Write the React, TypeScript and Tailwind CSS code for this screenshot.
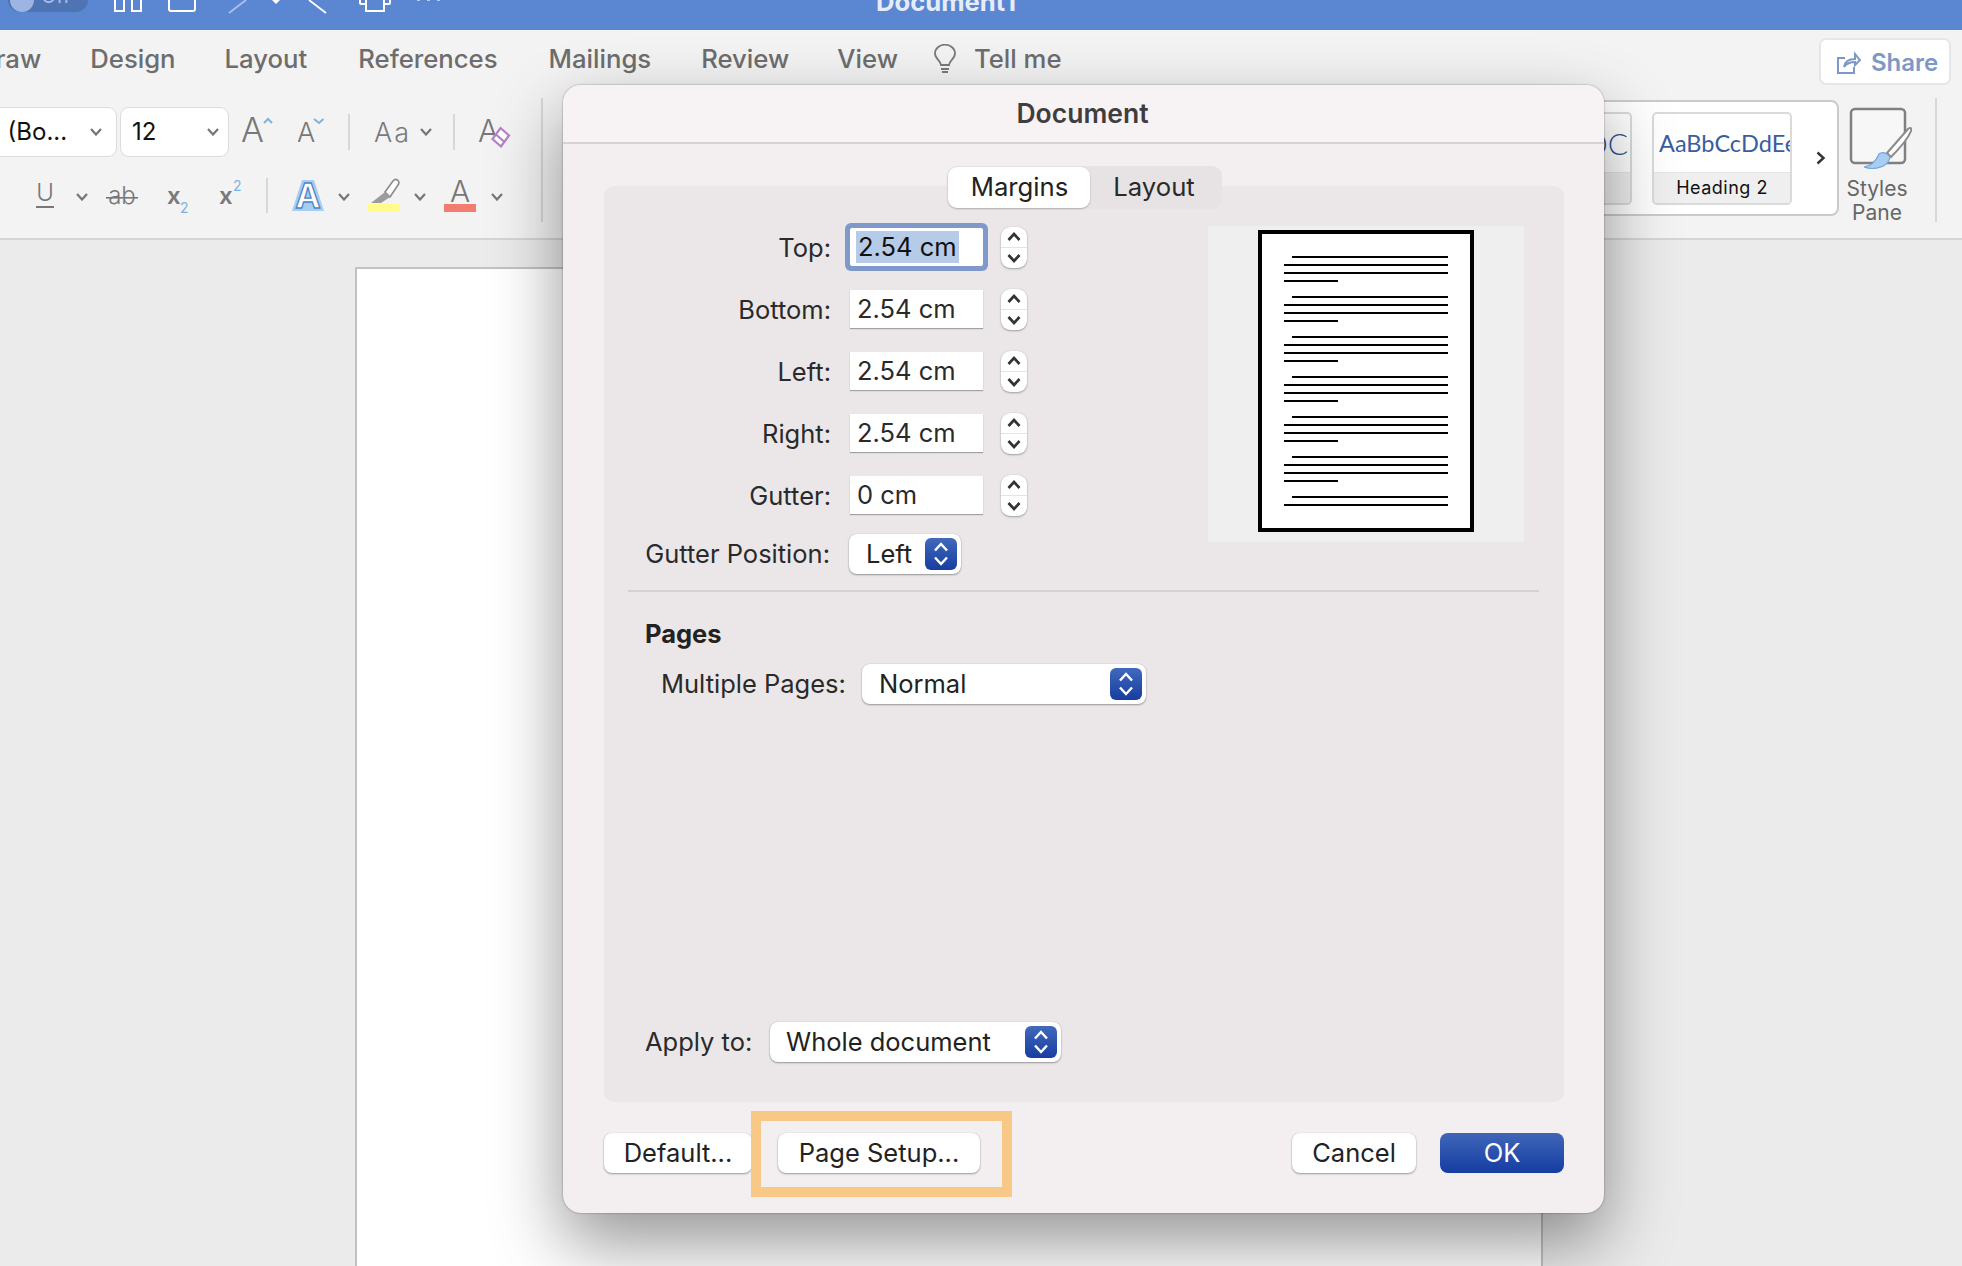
import React from "react";

const Chev = ({ c = "" }: { c?: string }) => (
  <svg viewBox="0 0 12 8" className={`w-[12px] h-[8px] shrink-0 ${c}`} fill="none" stroke="#757575" strokeWidth="2.2">
    <polyline points="1,1 6,6.5 11,1" />
  </svg>
);

const Sep = ({ c }: { c: string }) => <div className={`w-[2px] bg-[#d8d8d8] shrink-0 ${c}`} />;

const Updown = () => (
  <svg viewBox="0 0 16 26" className="w-[16px] h-[26px]" fill="none" stroke="#ffffff" strokeWidth="2.5">
    <polyline points="2,9.5 8,3 14,9.5" />
    <polyline points="2,16.5 8,23 14,16.5" />
  </svg>
);

const Select = ({ label, w, ml, pl }: { label: string; w: string; ml: string; pl: string }) => (
  <div className={`h-[40px] bg-white rounded-[8px] flex items-center justify-between pr-[4px] shadow-[0_1px_2px_rgba(0,0,0,0.35),0_0_1px_rgba(0,0,0,0.2)] shrink-0 ${w} ${ml} ${pl}`}>
    <span className="text-[25.5px] text-[#222222] leading-none">{label}</span>
    <div className="w-[32px] h-[32px] rounded-[6px] bg-gradient-to-b from-[#4169bb] to-[#173da0] flex items-center justify-center">
      <Updown />
    </div>
  </div>
);

const Stepper = () => (
  <div className="ml-[18px] w-[26px] h-[41px] bg-white rounded-[9px] shadow-[0_1px_2px_rgba(0,0,0,0.3),0_0_1px_rgba(0,0,0,0.2)] flex flex-col items-center justify-between py-[5px] relative shrink-0">
    <svg viewBox="0 0 14 9" className="w-[14px] h-[9px]" fill="none" stroke="#333333" strokeWidth="2.7"><polyline points="1.5,8 7,2 12.5,8" /></svg>
    <div className="w-full h-[1px] bg-[#e4e4e4]" />
    <svg viewBox="0 0 14 9" className="w-[14px] h-[9px]" fill="none" stroke="#333333" strokeWidth="2.7"><polyline points="1.5,1 7,7 12.5,1" /></svg>
  </div>
);

const FieldRow = ({ label, value, focus }: { label: string; value: string; focus?: boolean }) => (
  <div className="h-[62px] flex items-center">
    <div className="w-[227px] text-right text-[25.5px] text-[#2a2a2a] leading-none pt-[1px]">{label}</div>
    <div
      className={
        focus
          ? "ml-[19px] w-[133px] h-[38px] bg-white flex items-center pl-[6px] rounded-[2px] shadow-[0_0_0_5px_#7f99cb]"
          : "ml-[19px] w-[133px] h-[38px] bg-white flex items-center pl-[7px] shadow-[0_1px_1px_rgba(0,0,0,0.3)]"
      }
    >
      {focus ? (
        <span className="text-[25.5px] text-[#111111] leading-[32px] bg-[#b6cbe8] px-[2px]">{value}</span>
      ) : (
        <span className="text-[25.5px] text-[#2a2a2a] leading-none">{value}</span>
      )}
    </div>
    <Stepper />
  </div>
);

const Btn = ({ label, w, ml }: { label: string; w: string; ml: string }) => (
  <div className={`h-[40px] bg-white rounded-[8px] flex items-center justify-center text-[25.5px] text-[#222222] shadow-[0_1px_2px_rgba(0,0,0,0.35),0_0_1px_rgba(0,0,0,0.2)] shrink-0 ${w} ${ml}`}>
    {label}
  </div>
);

const Preview = () => {
  const groups = [0, 40, 80, 120, 160, 200];
  return (
    <svg viewBox="0 0 216 302" className="w-[216px] h-[302px]">
      <rect x="2" y="2" width="212" height="298" fill="#ffffff" stroke="#000000" strokeWidth="4" />
      {groups.map((g) => (
        <g key={g} fill="#000000">
          <rect x="34" y={26 + g} width="156" height="2" />
          <rect x="26" y={34 + g} width="164" height="2" />
          <rect x="26" y={42 + g} width="164" height="2" />
          <rect x="26" y={50 + g} width="54" height="2" />
        </g>
      ))}
      <rect x="34" y="266" width="156" height="2" fill="#000000" />
      <rect x="26" y="274" width="164" height="2" fill="#000000" />
    </svg>
  );
};

const Dialog = () => (
  <div className="absolute left-[563px] top-[85px] w-[1041px] h-[1128px] rounded-[18px] bg-[#f3eff0] shadow-[0_30px_70px_rgba(0,0,0,0.42),0_0_2px_rgba(0,0,0,0.45)] flex flex-col">
    <div className="h-[59px] shrink-0 border-b-2 border-[#d6d2d3] bg-[#f7f2f3] rounded-t-[18px] flex items-center justify-center text-[26.5px] font-semibold text-[#3f3d3e] pr-[2px]">
      Document
    </div>
    <div className="px-[41px] pt-[22px] flex-1 flex flex-col relative">
      <div className="relative z-10 self-center ml-[1px] h-[43px] w-[275px] rounded-[10px] bg-[#e7e3e4] flex items-center pl-[1px] text-[25.7px] text-[#222222]">
        <div className="w-[142px] h-[41px] rounded-[9px] bg-white shadow-[0_1px_2px_rgba(0,0,0,0.25)] flex items-center justify-center pl-[2px]">Margins</div>
        <div className="flex-1 text-center pr-[3px] text-[#2a2a2a]">Layout</div>
      </div>
      <div className="-mt-[23px] h-[916px] w-[960px] rounded-[10px] bg-[#ebe7e8] flex flex-col">
        <div className="flex pt-[30px] justify-between pr-[40px]">
          <div className="flex flex-col">
            <FieldRow label="Top:" value="2.54 cm" focus />
            <FieldRow label="Bottom:" value="2.54 cm" />
            <FieldRow label="Left:" value="2.54 cm" />
            <FieldRow label="Right:" value="2.54 cm" />
            <FieldRow label="Gutter:" value="0 cm" />
            <div className="flex items-center mt-[8px]">
              <div className="w-[226px] text-right text-[25.5px] text-[#2a2a2a] leading-none whitespace-nowrap">Gutter Position:</div>
              <Select label="Left" w="w-[112px]" ml="ml-[19px]" pl="pl-[17px]" />
            </div>
          </div>
          <div className="mt-[10px] w-[316px] h-[316px] bg-[#efefef] flex items-start justify-center pt-[4px]">
            <Preview />
          </div>
        </div>
        <div className="mt-[16px] ml-[24px] mr-[25px] h-[2px] bg-[#d5d1d2]" />
        <div className="mt-[27px] ml-[41px] text-[25.5px] font-bold text-[#222222] leading-[30px]">Pages</div>
        <div className="mt-[15px] flex items-center ml-[57px]">
          <div className="text-[25.5px] text-[#2a2a2a] leading-none w-[184px] whitespace-nowrap">Multiple Pages:</div>
          <Select label="Normal" w="w-[284px]" ml="ml-[17px]" pl="pl-[17px]" />
        </div>
        <div className="mt-auto mb-[40px] flex items-center ml-[41px]">
          <div className="text-[25.5px] text-[#2a2a2a] leading-none w-[107px] whitespace-nowrap">Apply to:</div>
          <Select label="Whole document" w="w-[291px]" ml="ml-[18px]" pl="pl-[16px]" />
        </div>
      </div>
      <div className="mt-[31px] flex">
        <Btn label="Default..." w="w-[148px]" ml="ml-0" />
        <Btn label="Page Setup..." w="w-[202px]" ml="ml-[26px]" />
        <Btn label="Cancel" w="w-[124px]" ml="ml-[312px]" />
        <div className="ml-[24px] w-[124px] h-[40px] rounded-[8px] bg-gradient-to-b from-[#3f66b8] to-[#153ca2] flex items-center justify-center text-[25.5px] text-white shrink-0">OK</div>
      </div>
    </div>
    <div className="absolute left-[188px] top-[1026px] w-[261px] h-[86px] border-[10px] border-[#f8c986]" />
  </div>
);

const TitleBar = () => (
  <div className="h-[30px] shrink-0 bg-[#5b87d2] overflow-hidden flex items-start">
    <div className="ml-[8px] w-[80px] h-[12px] rounded-b-[12px] bg-[#4f74b4] flex items-end overflow-hidden">
      <div className="ml-[2px] w-[24px] h-[12px] rounded-b-full bg-[#9db5e3] shrink-0" />
      <span className="ml-[7px] mb-[6px] text-[20px] leading-[20px] text-[#a9c0ea]">Off</span>
    </div>
    <svg viewBox="0 0 28 12" className="ml-[26px] w-[28px] h-[12px]" fill="none" stroke="#ffffff" strokeWidth="2">
      <path d="M1 0V11H10V0M18 0V11H27V0" />
    </svg>
    <svg viewBox="0 0 28 12" className="ml-[26px] w-[28px] h-[12px]" fill="none" stroke="#ffffff" strokeWidth="2">
      <path d="M1 0V9Q1 11 3 11H25Q27 11 27 9V0" />
    </svg>
    <svg viewBox="0 0 20 14" className="ml-[32px] w-[20px] h-[14px]" fill="none" stroke="#a9c0ea" strokeWidth="1.8">
      <path d="M1 13L18 0" />
    </svg>
    <svg viewBox="0 0 8 4" className="ml-[24px] w-[8px] h-[4px]" fill="#ffffff"><path d="M0 0H8L4 4Z" /></svg>
    <svg viewBox="0 0 20 14" className="ml-[28px] w-[20px] h-[14px]" fill="none" stroke="#ffffff" strokeWidth="1.8">
      <path d="M1 0L18 13" />
    </svg>
    <svg viewBox="0 0 32 12" className="ml-[31px] w-[32px] h-[12px]" fill="none" stroke="#ffffff" strokeWidth="2">
      <path d="M1 0V3Q1 4 3 4H7M25 4H29Q31 4 31 3V0M7 0V11H25V0" />
    </svg>
    <div className="ml-[26px] flex gap-[7px]">
      <div className="w-[3px] h-[1px] bg-[#b9cbee]" />
      <div className="w-[3px] h-[1px] bg-[#b9cbee]" />
      <div className="w-[3px] h-[1px] bg-[#b9cbee]" />
    </div>
    <div className="ml-[436px] -mt-[12px] text-[25.6px] leading-[28px] font-bold text-[#e6ecf8] whitespace-nowrap">Document1</div>
  </div>
);

const Tabs = () => (
  <div className="h-[68px] flex items-start text-[25.7px] font-medium text-[#6d6d6d] leading-[58px] whitespace-nowrap">
    <span className="-ml-[23px]">Draw</span>
    <span className="ml-[49px]">Design</span>
    <span className="ml-[49px]">Layout</span>
    <span className="ml-[51px]">References</span>
    <span className="ml-[51px]">Mailings</span>
    <span className="ml-[50px]">Review</span>
    <span className="ml-[48px]">View</span>
    <svg viewBox="0 0 22 30" className="ml-[36px] mt-[14px] w-[22px] h-[30px]" fill="none" stroke="#7a7a7a" strokeWidth="1.8">
      <path d="M7 21C7 17 1 15 1 9.5A10 8.8 0 0 1 21 9.5C21 15 15 17 15 21Z" />
      <path d="M7 25H15M8 28H14" />
    </svg>
    <span className="ml-[18px]">Tell me</span>
    <div className="absolute left-[1819px] top-[38px] w-[132px] h-[47px] bg-white rounded-[7px] border-2 border-[#e6e6e6] flex items-center pl-[16px] gap-[10px] text-[#7e98c6] font-semibold text-[24px] leading-none">
      <svg viewBox="0 0 24 24" className="w-[24px] h-[24px]" fill="none" stroke="#7e98c6" strokeWidth="2">
        <path d="M8 8H1V23H17V17M7 17C8 11 12 9 18 9V4L23 10L18 15V12C14 12 10 13 7 17Z" />
      </svg>
      <span className="pt-[2px]">Share</span>
    </div>
  </div>
);

const Row1 = () => (
  <div className="h-[48px] flex items-center">
    <div className="w-[116px] h-[48px] bg-white rounded-r-[8px] shadow-[0_0_0_1px_#dcdcdc] flex items-center justify-between pr-[14px] overflow-hidden shrink-0">
      <span className="-ml-[5px] text-[24px] text-[#111111] leading-none whitespace-nowrap font-normal">i (Bo...</span>
      <Chev />
    </div>
    <div className="ml-[5px] w-[107px] h-[48px] bg-white rounded-[8px] shadow-[0_0_0_1px_#dcdcdc] flex items-center justify-between pl-[11px] pr-[9px] shrink-0">
      <span className="text-[24px] text-[#111111] leading-none">12</span>
      <Chev />
    </div>
    <svg viewBox="0 0 32 48" className="ml-[14px] w-[32px] h-[48px]" fill="none">
      <text x="-1" y="34" fontSize="34" fontWeight="300" fill="#777777" fontFamily="Inter">A</text>
      <polyline points="22,15 26,11 30,15" stroke="#7fb2de" strokeWidth="2" />
    </svg>
    <svg viewBox="0 0 28 48" className="ml-[24px] w-[28px] h-[48px]" fill="none">
      <text x="-1" y="34" fontSize="27" fontWeight="300" fill="#777777" fontFamily="Inter">A</text>
      <polyline points="16,11 21,15 25.5,11" stroke="#7fb2de" strokeWidth="2" />
    </svg>
    <Sep c="ml-[22px] h-[36px]" />
    <span className="ml-[24px] text-[27px] font-light text-[#7a7a7a] tracking-[2px] leading-none">Aa</span>
    <Chev c="ml-[9px]" />
    <Sep c="ml-[21px] h-[36px]" />
    <svg viewBox="0 0 34 48" className="ml-[23px] w-[34px] h-[48px]" fill="none">
      <text x="0" y="34" fontSize="31" fontWeight="300" fill="#777777" fontFamily="Inter">A</text>
      <path d="M22.5 20L31 27.5L23 38.5L14.5 31Z" fill="#ffffff" stroke="#b67fc9" strokeWidth="2.2" />
      <path d="M18 26.5L26.5 34" stroke="#b67fc9" strokeWidth="2.2" />
    </svg>
  </div>
);

const Row2 = () => (
  <div className="mt-[22px] h-[35px] flex items-center">
    <svg viewBox="0 0 20 35" className="ml-[35px] w-[20px] h-[35px]" fill="none">
      <text x="10" y="23" textAnchor="middle" fontSize="24" fontWeight="300" fill="#777777" fontFamily="Inter">U</text>
      <rect x="1" y="28" width="18" height="2" fill="#777777" />
    </svg>
    <Chev c="ml-[21px] mt-[2px]" />
    <svg viewBox="0 0 34 35" className="ml-[17px] w-[34px] h-[35px]" fill="none">
      <text x="17" y="26" textAnchor="middle" fontSize="24" fontWeight="300" fill="#777777" fontFamily="Inter">ab</text>
      <rect x="1" y="19" width="32" height="1.6" fill="#777777" />
    </svg>
    <svg viewBox="0 0 24 35" className="ml-[28px] w-[24px] h-[35px]" fill="none">
      <text x="0" y="26" fontSize="24" fontWeight="600" fill="#7a7a7a" fontFamily="Inter">x</text>
      <text x="13" y="35" fontSize="14" fill="#7fb2de" fontFamily="Inter">2</text>
    </svg>
    <svg viewBox="0 0 24 35" className="ml-[28px] w-[24px] h-[35px]" fill="none">
      <text x="0" y="26" fontSize="24" fontWeight="600" fill="#7a7a7a" fontFamily="Inter">x</text>
      <text x="14" y="13" fontSize="14" fill="#7fb2de" fontFamily="Inter">2</text>
    </svg>
    <Sep c="ml-[23px] h-[35px]" />
    <svg viewBox="0 0 32 35" className="ml-[24px] w-[32px] h-[35px]" fill="none">
      <path d="M10 2H22L32 33H0Z" fill="#a9cdf0" />
      <text x="16" y="30" textAnchor="middle" fontSize="34" fontWeight="700" fill="#ffffff" stroke="#4c86c6" strokeWidth="1.3" fontFamily="Inter">A</text>
    </svg>
    <Chev c="ml-[14px] mt-[2px]" />
    <svg viewBox="0 0 32 35" className="ml-[18px] w-[32px] h-[35px]" fill="none">
      <rect x="0" y="26" width="32" height="8" fill="#fdfc8c" />
      <path d="M17 14L25 3Q27 0.5 29.5 2Q32 4 30 7L22 19Z" fill="#ffffff" stroke="#8a8a8a" strokeWidth="1.6" />
      <path d="M17 14L22 19L13 25H3Z" fill="#9c9c9c" />
    </svg>
    <Chev c="ml-[14px] mt-[2px]" />
    <svg viewBox="0 0 32 35" className="ml-[18px] w-[32px] h-[35px]" fill="none">
      <rect x="0" y="26" width="32" height="8" fill="#f27c70" />
      <text x="16" y="24" textAnchor="middle" fontSize="30" fontWeight="300" fill="#777777" fontFamily="Inter">A</text>
    </svg>
    <Chev c="ml-[15px] mt-[2px]" />
  </div>
);

const Gallery = () => (
  <div className="ml-[20px] mt-[2px] w-[1276px] h-[116px] rounded-[8px] bg-white border-2 border-[#cbcbcb] flex items-center justify-end pr-[9px] shrink-0">
    <div className="w-[140px] h-[93px] rounded-[5px] border-2 border-[#dadada] flex flex-col overflow-hidden">
      <div className="flex-1 flex items-center justify-end pr-[2px] pt-[2px] overflow-hidden text-[30px] font-light text-[#2f5496] whitespace-nowrap" style={{ fontFamily: "Lato, sans-serif" }}>AaBbCcDC</div>
      <div className="h-[31px] bg-[#efefef] border-t border-[#e6e6e6]" />
    </div>
    <div className="ml-[20px] w-[140px] h-[93px] rounded-[5px] border-2 border-[#dadada] flex flex-col overflow-hidden">
      <div className="flex-1 pl-[5px] pt-[2px] flex items-center overflow-hidden text-[23.5px] text-[#3a5d9e] whitespace-nowrap" style={{ fontFamily: "Lato, sans-serif" }}>AaBbCcDdEe</div>
      <div className="h-[31px] bg-[#efefef] border-t border-[#e6e6e6] flex items-center justify-center text-[18px] tracking-[0.5px] text-[#111111]">Heading 2</div>
    </div>
    <svg viewBox="0 0 10 14" className="ml-[24px] w-[10px] h-[14px] mr-[2px]" fill="none" stroke="#333333" strokeWidth="2.4">
      <polyline points="1.5,1.5 7.5,7 1.5,12.5" />
    </svg>
  </div>
);

const StylesPane = () => (
  <div className="w-[76px] self-start flex flex-col items-center text-[21px] text-[#666666] leading-[24px] shrink-0">
    <svg viewBox="0 0 70 64" className="mt-[9px] w-[70px] h-[64px] shrink-0" fill="none">
      <rect x="9" y="2" width="54" height="54" rx="4" stroke="#808080" strokeWidth="2.5" fill="#f7f7f7" />
      <path d="M45 46L66 22Q70 19 69 24Q65 34 49 50Z" fill="#ffffff" stroke="#8a8a8a" strokeWidth="2" />
      <path d="M22 60C30 59 34 54 37 47Q42 43 48 50Q47 57 39 60Q30 63 22 60Z" fill="#a9cdf0" stroke="#6fa6dc" strokeWidth="1.2" />
    </svg>
    <div className="mt-[6px]">Styles</div>
    <div>Pane</div>
  </div>
);

export default function App() {
  return (
    <div className="relative w-[1962px] h-[1266px] overflow-hidden flex flex-col bg-[#ebebeb]" style={{ fontFamily: "Inter, 'Noto Sans', sans-serif" }}>
      <TitleBar />
      <div className="h-[210px] shrink-0 bg-[#f3f3f3] border-b-2 border-[#d5d5d5] flex flex-col">
        <Tabs />
        <div className="flex h-[124px]">
          <div className="w-[541px] shrink-0 pt-[10px] flex flex-col">
            <Row1 />
            <Row2 />
          </div>
          <Sep c="h-[124px]" />
          <Gallery />
          <StylesPane />
          <Sep c="ml-[20px] h-[124px]" />
        </div>
      </div>
      <div className="flex-1 pl-[355px] pt-[27px]">
        <div className="w-[1188px] h-full bg-white border-2 border-[#c2c2c2] border-b-0" />
      </div>
      <Dialog />
    </div>
  );
}
